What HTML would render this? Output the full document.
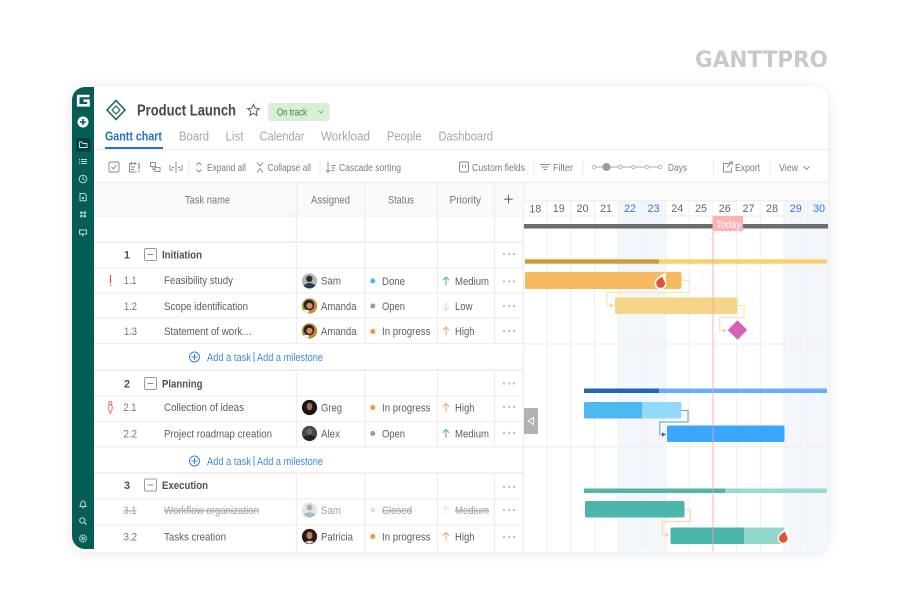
<!DOCTYPE html>
<html lang="en"><head><meta charset="utf-8"><title>Product Launch</title>
<style>
html,body{margin:0;padding:0;background:#fff;width:900px;height:600px;overflow:hidden}
svg{display:block;filter:blur(.35px)}
text{font-family:"Liberation Sans",sans-serif;font-size:10.8px;fill:#5e5e5e}
.tb{font-size:10px;fill:#7c7c7c}
.tab{font-size:12.6px;fill:#a6a6a6}
.hd{font-size:10.8px;fill:#757575}
.dt{font-size:10.8px;fill:#666;text-anchor:middle}
.bl{fill:#2b7dd8}
.num{fill:#767676}
.g{font-weight:bold;fill:#4f4f4f}
.add{fill:#3b8be0}
.x{fill:#a2a2a2;text-decoration:line-through}
.ln{stroke:#efefef;stroke-width:1.3;fill:none}
.v{stroke:#f0f0f0;stroke-width:1.1;fill:none}
.ic{stroke:#858585;stroke-width:.9;fill:none}
.s{stroke:#b9dad4;stroke-width:1;fill:none}
</style></head><body>
<svg width="900" height="600" viewBox="0 0 900 600" xmlns="http://www.w3.org/2000/svg">
<defs><filter id="sh" x="-10%" y="-10%" width="120%" height="120%"><feDropShadow dx="0" dy="1" stdDeviation="6" flood-color="#000" flood-opacity=".1"/></filter></defs>
<rect width="900" height="600" fill="#fff"/>
<text x="695" y="67" textLength="133" lengthAdjust="spacingAndGlyphs" style="font-family:'DejaVu Sans',sans-serif;font-size:22px;font-weight:bold;fill:#c9c9c9">GANTTPRO</text>

<!-- card -->
<rect x="72" y="86.500" width="756" height="465.500" rx="14" fill="#fff" filter="url(#sh)"/>
<path d="M94 87H85A13 13 0 0 0 72 100V536A13 13 0 0 0 85 549H94Z" fill="#045e55"/>
<path d="M89.500 96H78.200V105.300H88.500V100.700H83.500" fill="none" stroke="#fff" stroke-width="2.600"/>
<circle cx="83" cy="122" r="5.500" fill="#fff"/><path d="M83 119V125M80 122H86" stroke="#045e55" stroke-width="1.600"/>
<rect x="76" y="138" width="14.500" height="13.500" rx="2" fill="#03423c"/>
<path d="M79.500 142V147.500H87V143.500H83L82 142Z" fill="none" stroke="#cfe3df" stroke-width=".9"/>
<path class="s" d="M81 159.500H87M81 161.500H87M81 163.500H87M79 159.500H80M79 161.500H80M79 163.500H80" stroke-width=".8"/>
<circle class="s" cx="83" cy="179" r="3.800"/><path class="s" d="M83 176.800V179.200L84.800 180.200" stroke-width=".8"/>
<path class="s" d="M80 193.500H84.500L86.200 195.200V200.800H80Z" stroke-width=".9"/><rect x="82" y="197" width="2" height="2" fill="#b9dad4"/>
<g fill="#b9dad4"><rect x="80.200" y="211.500" width="2.400" height="2.400"/><rect x="83.600" y="211.500" width="2.400" height="2.400"/><rect x="80.200" y="214.900" width="2.400" height="2.400"/><rect x="83.600" y="214.900" width="2.400" height="2.400"/></g>
<path class="s" d="M79.500 230H86.500V234H84L82.500 235.500V234H79.500Z" stroke-width=".9"/>
<path class="s" d="M80 506.500H86C85 505.500 85.300 504 85 503A2 2 0 0 0 81 503C80.700 504 81 505.500 80 506.500ZM82.300 507.600H83.700" stroke-width=".9"/>
<circle class="s" cx="82.300" cy="520.500" r="2.600"/><path class="s" d="M84.300 522.500L86.500 524.700" stroke-width="1.100"/>
<circle cx="83" cy="538.500" r="3.400" fill="none" stroke="#b9dad4" stroke-width="1.400" stroke-dasharray="1.400 .7"/><circle class="s" cx="83" cy="538.500" r="1.200" stroke-width=".8"/>

<!-- title -->
<path d="M116 100.500L125 110L116 119.500L107 110Z" fill="none" stroke="#1f6a60" stroke-width="1.600"/>
<path d="M116 106L120 110L116 114L112 110Z" fill="none" stroke="#1f6a60" stroke-width="1.200"/>
<text x="137" y="115.500" textLength="99" lengthAdjust="spacingAndGlyphs" style="font-size:15.500px;font-weight:bold;fill:#484848">Product Launch</text>
<path d="M253.500 104.300L255.200 108.200L259.300 108.600L256.200 111.300L257.100 115.400L253.500 113.200L249.900 115.400L250.800 111.300L247.700 108.600L251.800 108.200Z" fill="none" stroke="#5c5c5c" stroke-width="1"/>
<rect x="268" y="103" width="61.500" height="18" rx="3" fill="#d8eed6"/>
<text x="277" y="115.500" textLength="30" lengthAdjust="spacingAndGlyphs" style="font-size:10px;fill:#477a52">On track</text>
<path d="M319 111L321 113L323 111" fill="none" stroke="#6c9673" stroke-width=".8"/>

<!-- tabs -->
<text x="105" y="140.500" textLength="57" lengthAdjust="spacingAndGlyphs" class="tab" style="fill:#2374c6;font-weight:bold">Gantt chart</text>
<text x="179" y="140.500" textLength="30" lengthAdjust="spacingAndGlyphs" class="tab">Board</text>
<text x="225.500" y="140.500" textLength="18" lengthAdjust="spacingAndGlyphs" class="tab">List</text>
<text x="259.500" y="140.500" textLength="45" lengthAdjust="spacingAndGlyphs" class="tab">Calendar</text>
<text x="321" y="140.500" textLength="49" lengthAdjust="spacingAndGlyphs" class="tab">Workload</text>
<text x="387" y="140.500" textLength="34.500" lengthAdjust="spacingAndGlyphs" class="tab">People</text>
<text x="438.500" y="140.500" textLength="54.500" lengthAdjust="spacingAndGlyphs" class="tab">Dashboard</text>
<rect x="105" y="147" width="58" height="2" fill="#2374c6"/>
<path d="M94 149.700H828" stroke="#e8e8e8" stroke-width="1"/>

<!-- toolbar -->
<rect x="109" y="162" width="10" height="10" rx="1.500" class="ic"/><path class="ic" d="M111.500 167L113.500 169L116.500 165"/>
<path class="ic" d="M129.500 163.500H136.500M129.500 163.500V172H136.500M131.500 162V165M135 162V165M131 167H135M131 169.500H134"/><path d="M139 163V169M139 170.500V172" stroke="#777" stroke-width="1.100"/>
<rect x="150.500" y="162.500" width="5" height="4" class="ic"/><rect x="155" y="167.500" width="5" height="4" class="ic"/><path class="ic" d="M153 166.500V169.500H155"/>
<path class="ic" d="M170 165V170H173M176 161.500V173M179 170H182V165M172 167.500H174M178 167.500H180"/>
<path d="M188.300 160V175M320 160V175M534 160V175M583 160V175M713.500 160V175M770 160V175" stroke="#ebebeb" stroke-width="1"/>
<path class="ic" d="M196.500 165L199 162.500L201.500 165M196.500 169.500L199 172L201.500 169.500"/>
<text x="207" y="170.800" textLength="39" lengthAdjust="spacingAndGlyphs" class="tb">Expand all</text>
<path class="ic" d="M257 162.500L260 166L263 162.500M257 172.500L260 168.500L263 172.500"/>
<text x="267.500" y="170.800" textLength="43.500" lengthAdjust="spacingAndGlyphs" class="tb">Collapse all</text>
<path class="ic" d="M328 162V172M326 170L328 172.300L330 170M331.500 165.500H335.500M331.500 168H335M331.500 170.500H334"/>
<text x="339" y="170.800" textLength="62" lengthAdjust="spacingAndGlyphs" class="tb">Cascade sorting</text>
<path class="ic" d="M462.500 164.500V168M465.500 164.500V168"/><rect x="459.500" y="162" width="9" height="10" rx="1.500" class="ic"/>
<text x="472" y="170.800" textLength="53" lengthAdjust="spacingAndGlyphs" class="tb">Custom fields</text>
<path class="ic" d="M540 164.500H550M541.500 167H548.500M543.500 169.500H546.500"/>
<text x="553" y="170.800" textLength="20" lengthAdjust="spacingAndGlyphs" class="tb">Filter</text>
<path d="M594 167H660" stroke="#a8a8a8" stroke-width=".9"/>
<g fill="#fff" stroke="#a8a8a8" stroke-width=".8"><circle cx="594" cy="167" r="1.800"/><circle cx="620.500" cy="167" r="1.800"/><circle cx="633.500" cy="167" r="1.800"/><circle cx="647" cy="167" r="1.800"/><circle cx="660" cy="167" r="1.800"/></g>
<circle cx="606.500" cy="167" r="4" fill="#9c9c9c"/>
<text x="668" y="170.800" textLength="19" lengthAdjust="spacingAndGlyphs" class="tb">Days</text>
<path class="ic" d="M731 163.500H723.500V172H731.500V167.500M727 167.500L732 162M729 161.800H732.300V165"/>
<text x="735" y="170.800" textLength="25" lengthAdjust="spacingAndGlyphs" class="tb">Export</text>
<text x="779" y="170.800" textLength="19" lengthAdjust="spacingAndGlyphs" class="tb">View</text>
<path class="ic" d="M803.500 166.500L806.500 169.500L809.500 166.500"/>

<!-- table header -->
<rect x="94" y="182" width="429" height="34" fill="#fafafa"/>
<rect x="523" y="182" width="305" height="18.500" fill="#fbfbfb"/>
<path class="ln" d="M94 182.300H828"/>
<text x="185" y="203.300" textLength="45" lengthAdjust="spacingAndGlyphs" class="hd">Task name</text>
<text x="311" y="203.300" textLength="39" lengthAdjust="spacingAndGlyphs" class="hd">Assigned</text>
<text x="388" y="203.300" textLength="26" lengthAdjust="spacingAndGlyphs" class="hd">Status</text>
<text x="449.500" y="203.300" textLength="31.500" lengthAdjust="spacingAndGlyphs" class="hd">Priority</text>
<path d="M508.500 195V203.500M504.300 199.200H512.700" stroke="#666" stroke-width="1.100"/>

<!-- gantt background -->
<rect x="618" y="200.500" width="47.500" height="351" fill="#f3f7fc"/>
<rect x="784" y="200.500" width="44" height="351" fill="#f3f7fc"/>
<path class="v" d="M523.500 200V552M547 200V552M570.700 200V552M594.400 200V552M618 200V552M641.800 200V552M665.500 200V552M689.200 200V552M736.700 200V552M760.300 200V552M784 200V552M807.700 200V552"/>
<path d="M712.800 200V216" class="v"/>
<path class="ln" d="M523 200.800H828M523 216H828"/>
<path d="M523 344H828M523 447H828" stroke="#efefef" stroke-width="1.200"/>
<text class="dt" x="535.300" y="212.500">18</text><text class="dt" x="558.800" y="212">19</text><text class="dt" x="582.500" y="212">20</text><text class="dt" x="606" y="212">21</text><text class="dt bl" x="630" y="212">22</text><text class="dt bl" x="653.500" y="212">23</text><text class="dt" x="677.300" y="212">24</text><text class="dt" x="701" y="212">25</text><text class="dt" x="724.700" y="212">26</text><text class="dt" x="748.500" y="212">27</text><text class="dt" x="772" y="212">28</text><text class="dt bl" x="795.800" y="212">29</text><text class="dt bl" x="819" y="212">30</text>

<!-- table lines -->
<path class="ln" d="M94 216H523M94 242H523M94 268H523M94 293H523M94 318H523M94 343.500H523M94 370H523M94 396H523M94 421.500H523M94 447H523M94 473H523M94 499H523M94 525H523"/>
<path class="ln" style="stroke-width:1.800" d="M94 242H523M94 370H523M94 473H523"/>
<path class="ln" d="M296.500 182V343.500M296.500 370V447M296.500 473V552M365 182V343.500M365 370V447M365 473V552M437.500 182V343.500M437.500 370V447M437.500 473V552M494.500 182V343.500M494.500 370V447M494.500 473V552M523.500 182V552"/>

<!-- groups -->
<text class="g" x="124" y="258.300">1</text>
<rect x="144.500" y="248.500" width="12" height="12" rx="1.500" fill="#fff" stroke="#9a9a9a"/><path d="M147.500 254.500H153.500" stroke="#8a8a8a"/>
<text class="g" x="162" y="258.300" textLength="40" lengthAdjust="spacingAndGlyphs">Initiation</text>
<text class="g" x="124" y="387.300">2</text>
<rect x="144.500" y="377.500" width="12" height="12" rx="1.500" fill="#fff" stroke="#9a9a9a"/><path d="M147.500 383.500H153.500" stroke="#8a8a8a"/>
<text class="g" x="162" y="387.300" textLength="40.500" lengthAdjust="spacingAndGlyphs">Planning</text>
<text class="g" x="124" y="488.800">3</text>
<rect x="144.500" y="479" width="12" height="12" rx="1.500" fill="#fff" stroke="#9a9a9a"/><path d="M147.500 485H153.500" stroke="#8a8a8a"/>
<text class="g" x="162" y="488.800" textLength="46" lengthAdjust="spacingAndGlyphs">Execution</text>

<!-- indicators -->
<path d="M110.500 275V283" stroke="#ee4d43" stroke-width="1.200"/><circle cx="110.500" cy="285" r=".7" fill="#ee4d43"/>
<g fill="none" stroke="#ee6a5e" stroke-width=".9"><circle cx="110.300" cy="403" r="1.600"/><path d="M110.300 404.600C108 405 108 408 108.600 409.300L110.300 413.500L112 409.300C112.600 408 112.600 405 110.300 404.600Z"/></g>

<!-- numbers + names -->
<text class="num" x="124" y="283.800" textLength="12.500" lengthAdjust="spacingAndGlyphs">1.1</text><text x="164" y="283.800" textLength="69" lengthAdjust="spacingAndGlyphs">Feasibility study</text>
<text class="num" x="124" y="309.800" textLength="13" lengthAdjust="spacingAndGlyphs">1.2</text><text x="164" y="309.800" textLength="84" lengthAdjust="spacingAndGlyphs">Scope identification</text>
<text class="num" x="124" y="334.800" textLength="13" lengthAdjust="spacingAndGlyphs">1.3</text><text x="164" y="334.800" textLength="88" lengthAdjust="spacingAndGlyphs">Statement of work…</text>
<text class="num" x="123.500" y="410.800" textLength="13" lengthAdjust="spacingAndGlyphs">2.1</text><text x="164" y="410.800" textLength="80" lengthAdjust="spacingAndGlyphs">Collection of ideas</text>
<text class="num" x="123.500" y="437.300" textLength="13.500" lengthAdjust="spacingAndGlyphs">2.2</text><text x="164" y="437.300" textLength="108" lengthAdjust="spacingAndGlyphs">Project roadmap creation</text>
<text class="x" x="123.500" y="513.800" textLength="13" lengthAdjust="spacingAndGlyphs">3.1</text><text class="x" x="164" y="513.800" textLength="95" lengthAdjust="spacingAndGlyphs">Workflow organization</text>
<text class="num" x="123.500" y="540.300" textLength="13.500" lengthAdjust="spacingAndGlyphs">3.2</text><text x="164" y="540.300" textLength="62" lengthAdjust="spacingAndGlyphs">Tasks creation</text>

<!-- add rows -->
<g fill="none" stroke="#2f84da" stroke-width="1"><circle cx="194.500" cy="357" r="5"/><path d="M194.500 354V360M191.500 357H197.500"/><circle cx="194.500" cy="461" r="5"/><path d="M194.500 458V464M191.500 461H197.500"/></g>
<text class="add" x="207" y="360.800" textLength="44" lengthAdjust="spacingAndGlyphs">Add a task</text><path d="M254 352V362M254 456V466" stroke="#3b8be0" stroke-width=".9"/>
<text class="add" x="257" y="360.800" textLength="66" lengthAdjust="spacingAndGlyphs">Add a milestone</text>
<text class="add" x="207" y="464.800" textLength="44" lengthAdjust="spacingAndGlyphs">Add a task</text>
<text class="add" x="257" y="464.800" textLength="66" lengthAdjust="spacingAndGlyphs">Add a milestone</text>

<!-- avatars -->
<g><circle cx="309.500" cy="281" r="7.600" fill="#aebbba"/><path d="M303.500 285.500Q309.500 280.500 315.500 285.500A7.600 7.600 0 0 1 303.500 285.500Z" fill="#1e3d57"/><circle cx="309.300" cy="278.800" r="3.200" fill="#3c2a20"/></g>
<g><circle cx="309.500" cy="306" r="7.600" fill="#b78a35"/><circle cx="309" cy="305" r="5.300" fill="#33200f"/><circle cx="309.500" cy="305.800" r="3.100" fill="#c98f70"/><path d="M303.500 311Q306 309 309 310.500L308 313.500Z" fill="#fff"/></g>
<g><circle cx="309.500" cy="331" r="7.600" fill="#b78a35"/><circle cx="309" cy="330" r="5.300" fill="#33200f"/><circle cx="309.500" cy="330.800" r="3.100" fill="#c98f70"/><path d="M303.500 336Q306 334 309 335.500L308 338.500Z" fill="#fff"/></g>
<g><circle cx="309.500" cy="407.500" r="7.600" fill="#1b1614"/><ellipse cx="309.500" cy="406.500" rx="2.800" ry="3.700" fill="#a16c50"/></g>
<g><circle cx="309.500" cy="433.500" r="7.600" fill="#3d4c4c"/><ellipse cx="309.500" cy="431.500" rx="2.800" ry="3.200" fill="#7d6655"/><path d="M303 437Q309.500 433.500 316 437A7.600 7.600 0 0 1 303 437Z" fill="#1f2323"/></g>
<g><circle cx="309.500" cy="510" r="7.600" fill="#e3e6e6"/><circle cx="309.500" cy="507.500" r="3" fill="#bca99c"/><path d="M303.500 514.500Q309.500 510 315.500 514.500A7.600 7.600 0 0 1 303.500 514.500Z" fill="#a8bdcc"/></g>
<g><circle cx="309.500" cy="536.500" r="7.600" fill="#2c1c14"/><ellipse cx="309.500" cy="535.500" rx="3" ry="3.800" fill="#b38264"/><path d="M305 542Q309.500 539.500 314 542L309.500 544Z" fill="#e3d2c5"/></g>
<text x="321" y="284.300" textLength="20" lengthAdjust="spacingAndGlyphs">Sam</text>
<text x="321" y="309.800" textLength="35.500" lengthAdjust="spacingAndGlyphs">Amanda</text>
<text x="321" y="334.800" textLength="35.500" lengthAdjust="spacingAndGlyphs">Amanda</text>
<text x="321" y="411.300" textLength="21" lengthAdjust="spacingAndGlyphs">Greg</text>
<text x="321" y="437.300" textLength="19" lengthAdjust="spacingAndGlyphs">Alex</text>
<text class="x" style="text-decoration:none" x="321" y="513.800" textLength="20" lengthAdjust="spacingAndGlyphs">Sam</text>
<text x="321" y="540.300" textLength="32" lengthAdjust="spacingAndGlyphs">Patricia</text>

<!-- status -->
<circle cx="372.800" cy="281" r="2.500" fill="#4dbcd8"/><text x="382" y="284.800" textLength="23" lengthAdjust="spacingAndGlyphs">Done</text>
<circle cx="372.800" cy="306" r="2.500" fill="#9a9a9a"/><text x="382" y="309.800" textLength="23" lengthAdjust="spacingAndGlyphs">Open</text>
<circle cx="372.800" cy="331.500" r="2.500" fill="#f5963c"/><text x="382" y="334.800" textLength="48.500" lengthAdjust="spacingAndGlyphs">In progress</text>
<circle cx="372.800" cy="407.500" r="2.500" fill="#f5963c"/><text x="382" y="411.300" textLength="48.500" lengthAdjust="spacingAndGlyphs">In progress</text>
<circle cx="372.800" cy="433.500" r="2.500" fill="#9a9a9a"/><text x="382" y="437.300" textLength="23" lengthAdjust="spacingAndGlyphs">Open</text>
<circle cx="372.800" cy="510" r="2.500" fill="#d5ecd6"/><text class="x" x="382" y="513.800" textLength="30" lengthAdjust="spacingAndGlyphs">Closed</text>
<circle cx="372.800" cy="536.500" r="2.500" fill="#f5963c"/><text x="382" y="540.300" textLength="48.500" lengthAdjust="spacingAndGlyphs">In progress</text>

<!-- priority -->
<g fill="none" stroke-width="1">
<path stroke="#4ab77e" d="M446 285.500V277M442.800 280.300L446 277L449.200 280.300"/>
<path stroke="#d8d8d8" d="M446 302V310.500M442.800 307.300L446 310.500L449.200 307.300"/>
<path stroke="#f3a465" d="M446 335.500V327M442.800 330.300L446 327L449.200 330.300"/>
<path stroke="#f3a465" d="M446 412V403.500M442.800 406.800L446 403.500L449.200 406.800"/>
<path stroke="#4ab77e" d="M446 438V429.500M442.800 432.800L446 429.500L449.200 432.800"/>
<path stroke="#d9eedc" d="M446 514.500V506M442.800 509.300L446 506L449.200 509.300"/>
<path stroke="#f3a465" d="M446 541V532.500M442.800 535.800L446 532.500L449.200 535.800"/>
</g>
<text x="455" y="284.800" textLength="34" lengthAdjust="spacingAndGlyphs">Medium</text>
<text x="455" y="309.800" textLength="17.500" lengthAdjust="spacingAndGlyphs">Low</text>
<text x="455" y="334.800" textLength="19.500" lengthAdjust="spacingAndGlyphs">High</text>
<text x="455" y="411.300" textLength="19.500" lengthAdjust="spacingAndGlyphs">High</text>
<text x="455" y="437.300" textLength="34" lengthAdjust="spacingAndGlyphs">Medium</text>
<text class="x" x="455" y="513.800" textLength="34" lengthAdjust="spacingAndGlyphs">Medium</text>
<text x="455" y="540.300" textLength="19.500" lengthAdjust="spacingAndGlyphs">High</text>

<!-- dots -->
<g fill="#c2c2c2">
<circle cx="504" cy="254" r="1.200"/><circle cx="509" cy="254" r="1.200"/><circle cx="514" cy="254" r="1.200"/>
<circle cx="504" cy="281.500" r="1.200"/><circle cx="509" cy="281.500" r="1.200"/><circle cx="514" cy="281.500" r="1.200"/>
<circle cx="504" cy="306" r="1.200"/><circle cx="509" cy="306" r="1.200"/><circle cx="514" cy="306" r="1.200"/>
<circle cx="504" cy="331" r="1.200"/><circle cx="509" cy="331" r="1.200"/><circle cx="514" cy="331" r="1.200"/>
<circle cx="504" cy="383.500" r="1.200"/><circle cx="509" cy="383.500" r="1.200"/><circle cx="514" cy="383.500" r="1.200"/>
<circle cx="504" cy="407" r="1.200"/><circle cx="509" cy="407" r="1.200"/><circle cx="514" cy="407" r="1.200"/>
<circle cx="504" cy="433" r="1.200"/><circle cx="509" cy="433" r="1.200"/><circle cx="514" cy="433" r="1.200"/>
<circle cx="504" cy="487" r="1.200"/><circle cx="509" cy="487" r="1.200"/><circle cx="514" cy="487" r="1.200"/>
<circle cx="504" cy="510" r="1.200"/><circle cx="509" cy="510" r="1.200"/><circle cx="514" cy="510" r="1.200"/>
<circle cx="504" cy="537" r="1.200"/><circle cx="509" cy="537" r="1.200"/><circle cx="514" cy="537" r="1.200"/>
</g>

<!-- collapse handle -->
<rect x="524" y="408" width="14" height="26" rx="1" fill="#b2b2b2"/>
<path d="M533.500 417.500V424.500L528 421Z" fill="none" stroke="#fff" stroke-width="1"/>

<!-- gantt bars -->
<rect x="524" y="224" width="304" height="4.500" fill="#6d6d6d"/>
<rect x="525" y="259.300" width="134" height="4.400" fill="#cb9c38"/><rect x="659" y="259.300" width="168" height="4.400" fill="#f9cf6c"/>
<rect x="525" y="272" width="156.500" height="17" rx="2" fill="#f6ba60"/>
<rect x="615" y="297.500" width="122.500" height="16.500" rx="1.500" fill="#f6d58a"/>
<path d="M737.500 321L746.500 330L737.500 339L728.500 330Z" fill="#d860b9" stroke="#d860b9" stroke-width="1" stroke-linejoin="round"/>
<path d="M681 280.500H689.500V292.500H606.800V305.500H610" fill="none" stroke="#fde2b4" stroke-width="1.200"/><path d="M610 303.500L613.500 305.500L610 307.500Z" fill="#fbc97f"/>
<path d="M737.500 305.500H744V317.500H719.700V330.500H723" fill="none" stroke="#fde2b4" stroke-width="1.200"/><path d="M723 328.500L726.500 330.500L723 332.500Z" fill="#fbc97f"/>
<path d="M666.500 272.500C660 275 654.500 279 654.500 283.500A6 6 0 0 0 666.500 283.500C666.500 280 664.500 277 666.500 272.500Z" fill="#fff"/>
<path d="M662.500 276.500C659 278.500 656.200 280.500 656.200 283.500A4.400 4.400 0 0 0 665 283.500C665 281 663 279.500 662.500 276.500Z" fill="#e94f37"/>

<rect x="584" y="388.500" width="75" height="4.500" fill="#1f68b9"/><rect x="659" y="388.500" width="168" height="4.500" fill="#68aefa"/>
<rect x="584" y="402" width="97.500" height="16.500" rx="1.500" fill="#93d9ff"/><path d="M642 402H585.500A1.500 1.500 0 0 0 584 403.500V417A1.500 1.500 0 0 0 585.500 418.500H642Z" fill="#4eb9f1"/>
<rect x="667" y="425.500" width="117.500" height="16.500" rx="1.500" fill="#3aa6fd"/>
<path d="M681.500 410.500H688V422H659.800V434.500H663" fill="none" stroke="#7aa9de" stroke-width="1.200"/><path d="M662 432.300L666 434.500L662 436.700Z" fill="#2a6fc0"/>

<rect x="584" y="488.500" width="141" height="4.500" fill="#4fb6a8"/><rect x="725" y="488.500" width="102" height="4.500" fill="#97dace"/>
<rect x="585" y="501" width="99.500" height="16.500" rx="1.500" fill="#4db6aa"/>
<rect x="670.500" y="527.500" width="114" height="16.500" rx="1.500" fill="#91d8cc"/><path d="M744 527.500H672A1.500 1.500 0 0 0 670.500 529V542.500A1.500 1.500 0 0 0 672 544H744Z" fill="#4db6aa"/>
<path d="M684.500 509.500H690.500V521.500H662.300V535H666" fill="none" stroke="#fddaa4" stroke-width="1.200"/><path d="M665.500 533L669 535L665.500 537Z" fill="#fbc97f"/>
<path d="M789.500 527.500C783 530 777.500 534 777.500 538A6 6 0 0 0 789.500 538C789.500 535 787.500 532 789.500 527.500Z" fill="#fff"/>
<path d="M785 531.500C782 533.500 779 535.500 779 538.500A4.300 4.300 0 0 0 787.600 538.500C787.600 536 785.500 534.500 785 531.500Z" fill="#e94f37"/>

<!-- today -->
<rect x="712.300" y="216" width="1.300" height="335.500" fill="#ff9ea0" opacity=".6"/>
<rect x="712.800" y="216" width="30.200" height="15" fill="#ffb1b3"/>
<text x="716" y="228" textLength="25" lengthAdjust="spacingAndGlyphs" style="fill:#fff;font-size:10.800px">Today</text>
</svg>
</body></html>
